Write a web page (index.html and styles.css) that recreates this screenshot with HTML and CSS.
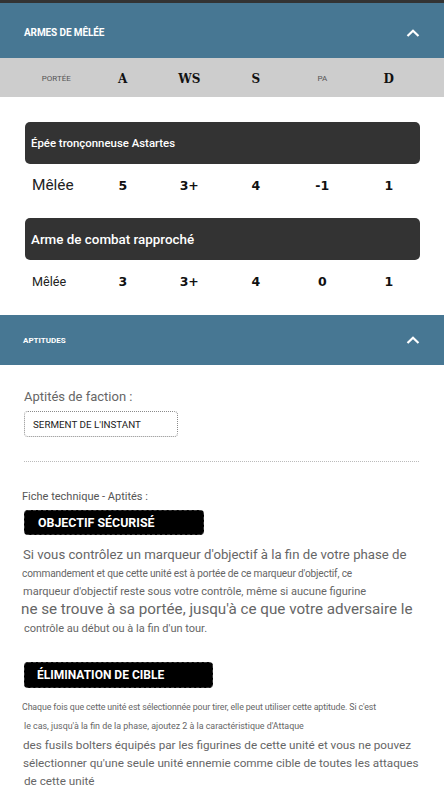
FILE: index.html
```html
<!DOCTYPE html>
<html lang="fr">
<head>
<meta charset="utf-8">
<title>Fiche</title>
<link rel="stylesheet" href="styles.css">
</head>
<body>
<div class="topbar"></div>
<section class="panel">
  <header class="panel-head head-melee">
    <span class="panel-title">ARMES DE MÊLÉE</span>
    <svg class="chev" width="14" height="8" viewBox="0 0 14 8"><path d="M1.5 7 L7 1.8 L12.5 7" fill="none" stroke="#fff" stroke-width="2.2"/></svg>
  </header>
  <div class="stat-head">
    <span class="th-small">PORTÉE</span>
    <span class="th-big">A</span>
    <span class="th-big">WS</span>
    <span class="th-big">S</span>
    <span class="th-small">PA</span>
    <span class="th-big">D</span>
  </div>
  <div class="weapons">
    <div class="wcard"><span class="wname w1">Épée tronçonneuse Astartes</span></div>
    <div class="wrow r1">
      <span class="range big">Mêlée</span>
      <span class="val">5</span><span class="val">3+</span><span class="val">4</span><span class="val">-1</span><span class="val">1</span>
    </div>
    <div class="wcard"><span class="wname w2">Arme de combat rapproché</span></div>
    <div class="wrow r2">
      <span class="range">Mêlée</span>
      <span class="val">3</span><span class="val">3+</span><span class="val">4</span><span class="val">0</span><span class="val">1</span>
    </div>
  </div>
</section>
<section class="panel">
  <header class="panel-head head-apt">
    <span class="panel-title small">APTITUDES</span>
    <svg class="chev" width="14" height="8" viewBox="0 0 14 8"><path d="M1.5 7 L7 1.8 L12.5 7" fill="none" stroke="#fff" stroke-width="2.2"/></svg>
  </header>
  <div class="apt-body">
    <div class="faction-label">Aptités de faction :</div>
    <div class="faction-box">SERMENT DE L'INSTANT</div>
    <div class="sep"></div>
    <div class="tech-label">Fiche technique - Aptités :</div>
    <div class="ability a1">OBJECTIF SÉCURISÉ</div>
    <p class="desc d1">
      <span class="ln s14">Si vous contrôlez un marqueur d'objectif à la fin de votre phase de</span>
      <span class="ln s10a">commandement et que cette unité est à portée de ce marqueur d'objectif, ce</span>
      <span class="ln s10b">marqueur d'objectif reste sous votre contrôle, même si aucune figurine</span>
      <span class="ln s15">ne se trouve à sa portée, jusqu'à ce que votre adversaire le</span>
      <span class="ln s10c">contrôle au début ou à la fin d'un tour.</span>
    </p>
    <div class="ability a2">ÉLIMINATION DE CIBLE</div>
    <p class="desc d2">
      <span class="ln s9a">Chaque fois que cette unité est sélectionnée pour tirer, elle peut utiliser cette aptitude. Si c'est</span>
      <span class="ln s9b">le cas, jusqu'à la fin de la phase, ajoutez 2 à la caractéristique d'Attaque</span>
      <span class="ln s12">des fusils bolters équipés par les figurines de cette unité et vous ne pouvez</span>
      <span class="ln s12">sélectionner qu'une seule unité ennemie comme cible de toutes les attaques</span>
      <span class="ln s12 last">de cette unité</span>
    </p>
  </div>
</section>
</body>
</html>
```

FILE: styles.css
```css
* { box-sizing: border-box; }
html, body { margin: 0; padding: 0; background: #fff; }
body { font-family: Roboto, "Liberation Sans", sans-serif; width: 444px; overflow: hidden; }

.topbar { height: 3px; background: #333; }

.panel-head {
  background: #477793;
  display: flex;
  align-items: center;
  justify-content: space-between;
  padding: 0 24px 0 24px;
  color: #fff;
}
.head-melee { height: 55px; padding-top: 4px; }
.head-apt { height: 50px; padding-left: 23px; }
.panel-title { font-size: 10px; font-weight: 700; letter-spacing: -0.1px; }
.panel-title.small { font-size: 8px; letter-spacing: 0; }
.chev { display: block; }

.stat-head {
  height: 39px;
  background: #cdcdcd;
  display: grid;
  grid-template-columns: repeat(6, 66.5px);
  padding-left: 23px;
  align-items: center;
  justify-items: center;
}
.th-small { font-size: 8px; color: #555; padding-top: 1px; }
.th-big { font-family: "DejaVu Serif", serif; font-weight: 700; font-size: 12px; color: #111; padding-top: 3px; }

.weapons { padding: 25px 24px 0 25px; }
.wcard {
  height: 42px;
  background: #333;
  border-radius: 5px;
  display: flex;
  align-items: center;
  padding-left: 6px;
}
.wname { color: #fff; font-weight: 500; }
.w1 { font-size: 11.4px; }
.w2 { font-size: 13.4px; }

.wrow {
  display: grid;
  grid-template-columns: repeat(6, 66.5px);
  margin-left: -2px;
  align-items: center;
  justify-items: center;
}
.r1 { height: 54px; padding-bottom: 12px; }
.r2 { height: 55px; padding-bottom: 12px; }
.range { justify-self: start; padding-left: 9px; font-size: 12.6px; color: #222; }
.range.big { font-size: 15.4px; }
.val { font-family: "DejaVu Sans", sans-serif; font-weight: 700; font-size: 12.5px; color: #111; }

.apt-body { padding: 22px 25px 0 24px; }
.faction-label { font-size: 13px; color: #666; line-height: 20px; }
.faction-box {
  margin-top: 4px;
  width: 154px;
  height: 26px;
  border: 1px dotted #8a8a8a;
  border-radius: 4px;
  display: flex;
  align-items: center;
  padding-left: 8px;
  font-size: 9.8px;
  color: #222;
}
.sep { margin-top: 24px; border-top: 1px dotted #bbb; }
.tech-label { margin-top: 28px; margin-left: -2px; font-size: 11px; color: #555; line-height: 14px; }

.ability {
  background: #000;
  color: #fff;
  font-weight: 700;
  font-size: 12.4px;
  border-radius: 4px;
  border: 1px dashed #3a3a3a;
  display: flex;
  align-items: center;
  padding-left: 13px;
}
.a1 { margin-top: 6px; width: 180px; height: 25px; }
.a2 { margin-top: 24px; width: 189px; height: 26px; font-size: 12px; padding-left: 12px; }

.desc { margin: 0; color: #666; }
.d1 { margin-top: 10px; }
.d2 { margin-top: 10px; }
.ln { display: block; white-space: nowrap; }
.s14 { font-size: 13.2px; line-height: 20px; margin-left: -1px; }
.s10a { font-size: 10.1px; line-height: 18px; margin-left: -2px; letter-spacing: -0.15px; }
.s10b { font-size: 11px; line-height: 17px; margin-left: -1px; }
.s15 { font-size: 15.2px; line-height: 19px; margin-left: -3px; }
.s10c { font-size: 11px; line-height: 19px; }
.s9a { font-size: 8.8px; line-height: 19px; margin-left: -2px; letter-spacing: -0.1px; }
.s9b { font-size: 8.9px; line-height: 19px; }
.s12 { font-size: 11.7px; line-height: 18px; margin-left: -1px; }
.s12.last { margin-left: 0; }
```
